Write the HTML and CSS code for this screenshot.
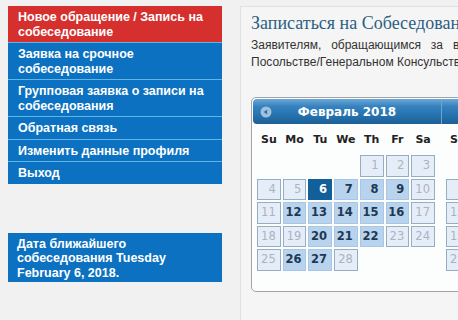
FILE: index.html
```html
<!DOCTYPE html>
<html lang="ru">
<head>
<meta charset="utf-8">
<title>Запись на собеседование</title>
<link rel="stylesheet" href="styles.css">
</head>
<body>
<div class="page">
  <aside class="sidebar">
    <nav class="menu">
      <a class="menu-item active" href="#">Новое обращение / Запись на собеседование</a>
      <a class="menu-item" href="#">Заявка на срочное собеседование</a>
      <a class="menu-item" href="#">Групповая заявка о записи на собеседования</a>
      <a class="menu-item" href="#">Обратная связь</a>
      <a class="menu-item" href="#">Изменить данные профиля</a>
      <a class="menu-item" href="#">Выход</a>
    </nav>
    <div class="next-date">Дата ближайшего собеседования Tuesday February 6, 2018.</div>
  </aside>

  <main class="panel">
    <h1 class="title">Записаться на Собеседование</h1>
    <p class="intro">Заявителям, обращающимся за визой в Посольстве/Генеральном Консульстве</p>

    <div class="datepicker">
      <div class="month">
        <div class="dp-header first">
          <span class="dp-prev"><svg width="12" height="12" viewBox="0 0 12 12"><circle cx="6" cy="6" r="5.5" fill="#9fc1de"/><path d="M3.6 6 L7.2 3.6 L7.2 8.4 Z" fill="#2c73ae"/></svg></span>
          <span class="dp-title">Февраль 2018</span>
        </div>
        <table class="dp-cal">
          <thead><tr><th>Su</th><th>Mo</th><th>Tu</th><th>We</th><th>Th</th><th>Fr</th><th>Sa</th></tr></thead>
          <tbody>
            <tr><td></td><td></td><td></td><td></td><td><span class="d off">1</span></td><td><span class="d off">2</span></td><td><span class="d off">3</span></td></tr>
            <tr><td><span class="d off">4</span></td><td><span class="d off">5</span></td><td><span class="d sel">6</span></td><td><span class="d on">7</span></td><td><span class="d on">8</span></td><td><span class="d on">9</span></td><td><span class="d off">10</span></td></tr>
            <tr><td><span class="d off">11</span></td><td><span class="d on">12</span></td><td><span class="d on">13</span></td><td><span class="d on">14</span></td><td><span class="d on">15</span></td><td><span class="d on">16</span></td><td><span class="d off">17</span></td></tr>
            <tr><td><span class="d off">18</span></td><td><span class="d off">19</span></td><td><span class="d on">20</span></td><td><span class="d on">21</span></td><td><span class="d on">22</span></td><td><span class="d off">23</span></td><td><span class="d off">24</span></td></tr>
            <tr><td><span class="d off">25</span></td><td><span class="d on">26</span></td><td><span class="d on">27</span></td><td><span class="d off">28</span></td><td></td><td></td><td></td></tr>
          </tbody>
        </table>
      </div>
      <div class="month">
        <div class="dp-header last">
          <span class="dp-title">Март 2018</span>
        </div>
        <table class="dp-cal">
          <thead><tr><th>Su</th><th>Mo</th><th>Tu</th><th>We</th><th>Th</th><th>Fr</th><th>Sa</th></tr></thead>
          <tbody>
            <tr><td></td><td></td><td></td><td></td><td><span class="d on">1</span></td><td><span class="d on">2</span></td><td><span class="d off">3</span></td></tr>
            <tr><td><span class="d off">4</span></td><td><span class="d on">5</span></td><td><span class="d on">6</span></td><td><span class="d on">7</span></td><td><span class="d off">8</span></td><td><span class="d on">9</span></td><td><span class="d off">10</span></td></tr>
            <tr><td><span class="d off">11</span></td><td><span class="d on">12</span></td><td><span class="d on">13</span></td><td><span class="d on">14</span></td><td><span class="d on">15</span></td><td><span class="d on">16</span></td><td><span class="d off">17</span></td></tr>
            <tr><td><span class="d off">18</span></td><td><span class="d on">19</span></td><td><span class="d on">20</span></td><td><span class="d on">21</span></td><td><span class="d on">22</span></td><td><span class="d on">23</span></td><td><span class="d off">24</span></td></tr>
            <tr><td><span class="d off">25</span></td><td><span class="d on">26</span></td><td><span class="d on">27</span></td><td><span class="d on">28</span></td><td><span class="d on">29</span></td><td><span class="d on">30</span></td><td><span class="d off">31</span></td></tr>
          </tbody>
        </table>
      </div>
    </div>
  </main>
</div>
</body>
</html>
```

FILE: styles.css
```css
html, body {
  margin: 0;
  padding: 0;
  overflow: hidden;
  background: #f1f1f1;
}

.page {
  display: flex;
  align-items: flex-start;
  width: 780px;
  padding: 6px 0 0 8px;
  font-family: "Liberation Sans", Arial, sans-serif;
}

/* ---------- sidebar ---------- */
.sidebar {
  width: 214px;
  flex: none;
  display: flex;
  flex-direction: column;
  gap: 49px;
}

.menu {
  display: flex;
  flex-direction: column;
  gap: 1px;
  background: #5db6e6;
}

.menu-item {
  display: block;
  padding: 4px 10px 3px;
  font-size: 12.5px;
  font-weight: bold;
  line-height: 14.5px;
  color: #fff;
  text-decoration: none;
  background: #0b71c0;
}

.menu-item.active {
  background: #d52f2e;
}

.next-date {
  padding: 4px 10px 2px 9px;
  font-size: 12.5px;
  font-weight: bold;
  line-height: 14.5px;
  color: #fff;
  background: #0b71c0;
}

/* ---------- main panel ---------- */
.panel {
  flex: 1;
  margin-left: 18px;
  min-height: 340px;
  padding: 5px 10px 0;
  border: 1px solid #e1e1e1;
  background: #f5f5f5;
}

.title {
  margin: 0;
  font-family: "Liberation Serif", "Times New Roman", serif;
  font-size: 18px;
  font-weight: normal;
  line-height: 23px;
  color: #2c5f82;
  white-space: nowrap;
}

.intro {
  width: 250px;
  margin: 2px 0 0;
  font-size: 12px;
  line-height: 17px;
  color: #333;
  text-align: justify;
}

/* ---------- datepicker ---------- */
.datepicker {
  display: flex;
  width: max-content;
  margin-top: 26px;
  padding: 1px 1px 19px;
  border: 1px solid #a3a3a3;
  border-radius: 5px;
  background: #fcfdfd;
  font-family: "DejaVu Sans", Verdana, sans-serif;
}

.month {
  width: 189px;
}

.dp-header {
  position: relative;
  height: 25px;
  display: flex;
  align-items: center;
  justify-content: center;
  background: linear-gradient(#6aa8d7 0%, #3582bf 30%, #2470ab 70%, #1c5f96 100%);
  border-right: 1px solid #6fa5cf;
}

.dp-header.first {
  border-radius: 4px 0 0 4px;
}

.dp-header.last {
  border-right: 0;
  border-radius: 0 4px 4px 0;
}

.dp-prev {
  position: absolute;
  left: 7px;
  top: 7px;
  width: 12px;
  height: 12px;
  display: flex;
}

.dp-title {
  font-size: 12px;
  font-weight: bold;
  color: #fff;
}

.dp-cal {
  width: 180px;
  margin-left: 3px;
  border-collapse: separate;
  border-spacing: 0;
  table-layout: fixed;
}

.dp-cal th {
  height: 30px;
  padding: 0;
  font-size: 11px;
  font-weight: bold;
  color: #222;
  text-align: center;
}

.dp-cal td {
  padding: 1px;
}

.d {
  display: block;
  box-sizing: border-box;
  height: 21.5px;
  padding-right: 4px;
  border: 1px solid transparent;
  font-size: 11.5px;
  line-height: 19.5px;
  text-align: right;
}

.d.off {
  background: #e5eef8;
  border-color: #97adc1;
  color: #aab4bf;
}

.d.on {
  background: #b8d3ee;
  border-color: #a9c6e5;
  color: #1e3852;
  font-weight: bold;
}

.d.sel {
  background: #135f9a;
  border-color: #135f9a;
  color: #fff;
  font-weight: bold;
}
```
